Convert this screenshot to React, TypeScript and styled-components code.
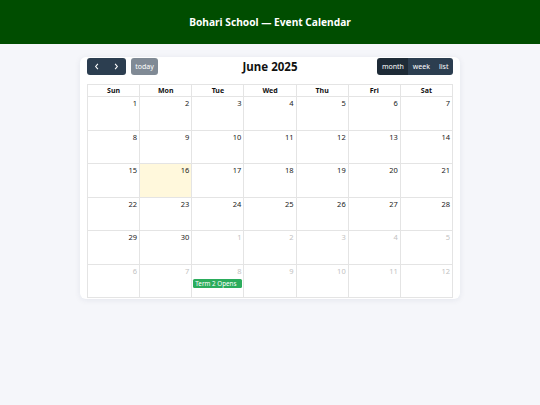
import React from 'react';
import styled, { createGlobalStyle } from 'styled-components';

const GlobalStyle = createGlobalStyle`
  html, body {
    margin: 0;
    padding: 0;
    background: #f5f6fa;
    font-family: 'Noto Sans', 'Open Sans', sans-serif;
    -webkit-font-smoothing: antialiased;
  }
`;

const Page = styled.div`
  min-height: 405px;
  background: #f5f6fa;
`;

const Header = styled.header`
  height: 44px;
  background: #004d00;
  color: #fff;
  display: flex;
  align-items: center;
  justify-content: center;
  font-size: 10.2px;
  font-weight: 700;
`;

const Card = styled.div`
  width: 380px;
  box-sizing: border-box;
  margin: 13px auto 0;
  background: #fff;
  border-radius: 6px;
  padding: 1px 7px 1px;
  box-shadow: 0 1px 6px rgba(30, 40, 80, 0.08);
`;

const Toolbar = styled.div`
  display: grid;
  grid-template-columns: 1fr auto 1fr;
  align-items: center;
  height: 17px;
  margin-bottom: 9px;
`;

const Left = styled.div`
  display: flex;
  gap: 5px;
`;

const Right = styled.div`
  display: flex;
  justify-content: flex-end;
`;

const Group = styled.div`
  display: flex;
  border-radius: 3px;
  overflow: hidden;
`;

const Btn = styled.button<{ $active?: boolean; $disabled?: boolean }>`
  border: 0;
  margin: 0;
  height: 17px;
  padding: 0 4.5px;
  font-family: inherit;
  font-size: 7px;
  color: #fff;
  background: ${p => (p.$active ? '#1e2b37' : '#2c3e50')};
  opacity: ${p => (p.$disabled ? 0.6 : 1)};
  display: flex;
  align-items: center;
  justify-content: center;
`;

const NavBtn = styled(Btn)`
  width: 19.5px;
  padding: 0;
`;

const TodayBtn = styled(Btn)`
  border-radius: 3px;
  width: 27px;
  padding: 0;
`;

const Title = styled.h2`
  margin: 0;
  font-size: 11.5px;
  font-weight: 700;
  color: #111;
`;

const Grid = styled.div`
  display: grid;
  grid-template-columns: repeat(7, 1fr);
  grid-template-rows: 12px repeat(6, 33.5px);
  border-left: 1px solid #e4e4e4;
  border-top: 1px solid #e4e4e4;
`;

const DayHead = styled.div`
  border-right: 1px solid #e4e4e4;
  border-bottom: 1px solid #e4e4e4;
  font-size: 7px;
  font-weight: 700;
  color: #111;
  display: flex;
  align-items: center;
  justify-content: center;
`;

const Cell = styled.div<{ $today?: boolean }>`
  border-right: 1px solid #e4e4e4;
  border-bottom: 1px solid #e4e4e4;
  background: ${p => (p.$today ? '#fff8dc' : '#fff')};
  padding: 2px 1px 0;
  display: flex;
  flex-direction: column;
  min-width: 0;
`;

const DayNum = styled.div<{ $other?: boolean }>`
  text-align: right;
  font-size: 7.5px;
  line-height: 9px;
  padding-right: 1px;
  color: ${p => (p.$other ? '#c2c2c2' : '#222')};
`;

const Event = styled.div`
  margin-top: 3px;
  background: #2bac5c;
  color: #fff;
  font-size: 6.3px;
  line-height: 9px;
  padding: 0 2px;
  border-radius: 1.5px;
`;

const days = ['Sun', 'Mon', 'Tue', 'Wed', 'Thu', 'Fri', 'Sat'];

const Chevron = ({ dir }: { dir: 'l' | 'r' }) => (
  <svg width="6" height="7" viewBox="0 0 6 8">
    <path d={dir === 'l' ? 'M4 1 L1.5 4 L4 7' : 'M2 1 L4.5 4 L2 7'} stroke="#fff" strokeWidth="1.3" fill="none" />
  </svg>
);

export default function App() {
  const cells: { n: number; other: boolean }[] = [];
  for (let i = 1; i <= 30; i++) cells.push({ n: i, other: false });
  for (let i = 1; i <= 12; i++) cells.push({ n: i, other: true });

  return (
    <Page>
      <GlobalStyle />
      <Header>Bohari School — Event Calendar</Header>
      <Card>
        <Toolbar>
          <Left>
            <Group>
              <NavBtn><Chevron dir="l" /></NavBtn>
              <NavBtn><Chevron dir="r" /></NavBtn>
            </Group>
            <TodayBtn $disabled>today</TodayBtn>
          </Left>
          <Title>June 2025</Title>
          <Right>
            <Group>
              <Btn $active>month</Btn>
              <Btn>week</Btn>
              <Btn>list</Btn>
            </Group>
          </Right>
        </Toolbar>
        <Grid>
          {days.map(d => (
            <DayHead key={d}>{d}</DayHead>
          ))}
          {cells.map((c, i) => (
            <Cell key={i} $today={!c.other && c.n === 16}>
              <DayNum $other={c.other}>{c.n}</DayNum>
              {c.other && c.n === 8 && <Event>Term 2 Opens</Event>}
            </Cell>
          ))}
        </Grid>
      </Card>
    </Page>
  );
}
